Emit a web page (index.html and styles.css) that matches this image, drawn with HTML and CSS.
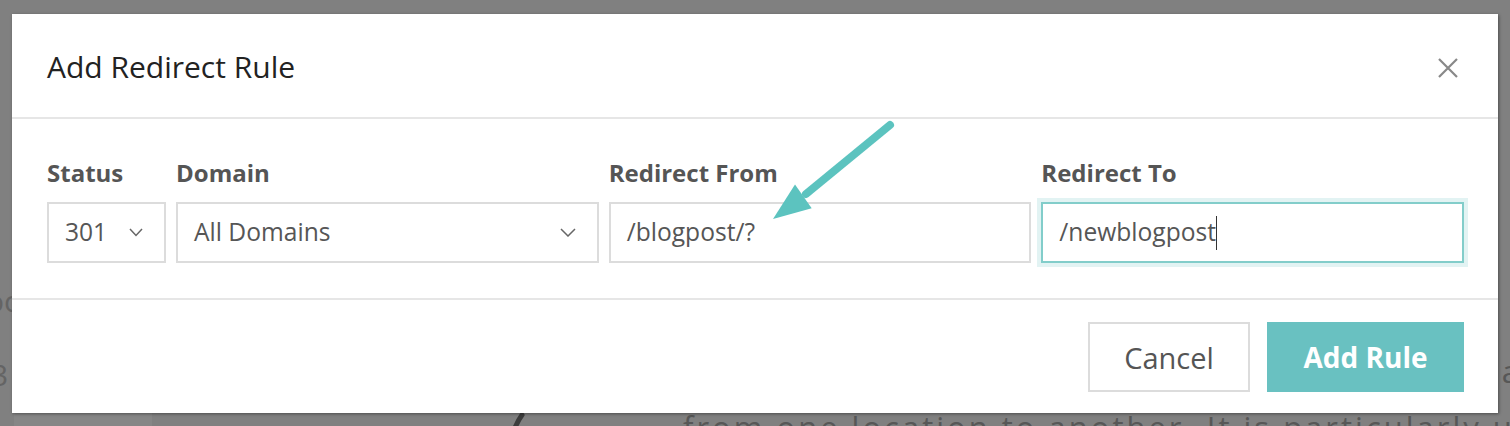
FILE: index.html
```html
<!DOCTYPE html>
<html lang="en">
<head>
<meta charset="utf-8">
<title>Add Redirect Rule</title>
<link rel="stylesheet" href="styles.css">
</head>
<body>
<div class="page">
  <aside class="side">
    <div class="side-line side-line-a">oc</div>
    <div class="side-line side-line-b">3</div>
    <div class="side-panel"></div>
  </aside>
  <main class="main">
    <div class="main-line main-line-end">a</div>
    <div class="main-line main-line-next">
      <svg class="figure-stroke" width="24" height="40" viewBox="0 0 24 40"><path d="M20 2 C14 10 10 20 6 38" fill="none" stroke="#3c3c3c" stroke-width="5" stroke-linecap="round"/></svg>
      <span class="main-text">from one location to another. It is particularly useful</span>
    </div>
  </main>
</div>

<div class="modal" role="dialog" aria-labelledby="modal-title">
  <header class="modal-header">
    <h2 class="modal-title" id="modal-title">Add Redirect Rule</h2>
    <button class="modal-close" type="button" aria-label="Close">
      <svg width="20" height="20" viewBox="0 0 20 20"><path d="M1 1 L19 19 M19 1 L1 19" stroke="#888" stroke-width="2.2" fill="none"/></svg>
    </button>
  </header>
  <section class="modal-body">
    <div class="field field-status">
      <div class="field-label">Status</div>
      <div class="control">
        <span class="control-value">301</span>
        <svg class="chevron" width="14" height="9" viewBox="0 0 14 9"><polyline points="1,1 7,7.5 13,1" fill="none" stroke="#666" stroke-width="1.5"/></svg>
      </div>
    </div>
    <div class="field">
      <div class="field-label">Domain</div>
      <div class="control">
        <span class="control-value">All Domains</span>
        <svg class="chevron" width="16" height="9" viewBox="0 0 16 9"><polyline points="1,1 8,8 15,1" fill="none" stroke="#666" stroke-width="1.5"/></svg>
      </div>
    </div>
    <div class="field">
      <div class="field-label">Redirect From</div>
      <div class="control">
        <span class="control-value">/blogpost/?</span>
      </div>
    </div>
    <div class="field">
      <div class="field-label">Redirect To</div>
      <div class="control control-focus">
        <span class="control-value">/newblogpost</span><span class="caret"></span>
      </div>
    </div>
  </section>
  <footer class="modal-footer">
    <button class="btn btn-cancel" type="button">Cancel</button>
    <button class="btn btn-primary" type="button">Add Rule</button>
  </footer>
  <svg class="annotation-arrow" width="160" height="120" viewBox="0 0 160 120">
    <line x1="138" y1="11" x2="54" y2="80" stroke="#5cc3bf" stroke-width="8" stroke-linecap="round"/>
    <polygon points="21,105 43,70.5 59.7,94.3" fill="#5cc3bf"/>
  </svg>
</div>
</body>
</html>
```

FILE: styles.css
```css
* {
  box-sizing: border-box;
}

html, body {
  margin: 0;
  padding: 0;
}

body {
  width: 1510px;
  height: 426px;
  overflow: hidden;
  background: #808080;
  font-family: "Open Sans", "Noto Sans", "DejaVu Sans", sans-serif;
  position: relative;
}

/* Background page (dimmed behind the modal) */
.page {
  display: grid;
  grid-template-columns: 152px 1fr;
  height: 426px;
  overflow: hidden;
}

.side {
  display: flex;
  flex-direction: column;
  padding-top: 273px;
  color: #646464;
  font-size: 30px;
  line-height: 56px;
}

.side-line {
  white-space: nowrap;
}

.side-line-a {
  margin-left: -14px;
}

.side-line-b {
  margin-left: -9px;
  margin-top: 18px;
}

.side-panel {
  flex: 1;
  margin-top: -50px;
  margin-left: 14px;
  background: #868686;
}

.main {
  display: flex;
  flex-direction: column;
  padding-top: 343px;
  margin-right: -12px;
  color: #575757;
  font-size: 31px;
  line-height: 56px;
  letter-spacing: 3px;
  min-width: 0;
}

.main-line {
  white-space: nowrap;
  overflow: visible;
}

.main-line-end {
  text-align: right;
}

.main-line-next {
  display: flex;
  align-items: flex-start;
}

.figure-stroke {
  margin-left: 350px;
  margin-top: 14px;
  flex: none;
}

.main-text {
  margin-left: 157px;
}

/* Modal */
.modal {
  position: absolute;
  left: 12px;
  top: 14px;
  width: 1486px;
  height: 399px;
  background: #fff;
  box-shadow: 1px 1px 3px rgba(0, 0, 0, 0.4);
  display: flex;
  flex-direction: column;
}

.modal-header {
  height: 105px;
  flex: none;
  display: flex;
  align-items: center;
  justify-content: space-between;
  padding: 0 40px 0 35px;
  border-bottom: 2px solid #e6e6e6;
}

.modal-title {
  margin: 0;
  font-size: 30px;
  font-weight: 400;
  color: #222;
  line-height: 40px;
  padding-top: 2px;
}

.modal-close {
  border: 0;
  background: none;
  padding: 0;
  width: 20px;
  height: 20px;
  display: flex;
  margin-top: 4px;
}

.modal-body {
  flex: none;
  display: flex;
  gap: 10px;
  padding: 41px 34px 35px 35px;
}

.field {
  flex: 1 1 0;
  min-width: 0;
  display: flex;
  flex-direction: column;
}

.field-status {
  flex: 0 0 119px;
}

.field-label {
  font-size: 24px;
  font-weight: 700;
  line-height: 26px;
  color: #555;
  margin-bottom: 16px;
  white-space: nowrap;
}

.control {
  height: 61px;
  border: 2px solid #dcdcdc;
  display: flex;
  align-items: center;
  justify-content: space-between;
  padding: 0 21px 0 16px;
  font-size: 24.6px;
  color: #565656;
  background: #fff;
}

.control-value {
  white-space: nowrap;
  line-height: 1;
}

.chevron {
  flex: none;
}

.control-focus {
  justify-content: flex-start;
  border-color: #82cdca;
  box-shadow: 0 0 0 4px #e2f3f3;
}

.caret {
  display: inline-block;
  width: 1px;
  height: 34px;
  background: #333;
  margin-left: 0;
}

.modal-footer {
  flex: none;
  border-top: 2px solid #e6e6e6;
  display: flex;
  justify-content: flex-end;
  gap: 17px;
  padding: 22px 34px 21px 35px;
}

.btn {
  height: 70px;
  font-family: inherit;
  font-size: 29px;
  display: flex;
  align-items: center;
  justify-content: center;
  padding: 0;
  cursor: pointer;
}

.btn-cancel {
  width: 162px;
  background: #fff;
  border: 2px solid #dcdcdc;
  color: #555;
  font-weight: 400;
}

.btn-primary {
  width: 197px;
  background: #69c1c1;
  border: 0;
  color: #fff;
  font-weight: 700;
  font-size: 28px;
}

.annotation-arrow {
  position: absolute;
  left: 740px;
  top: 100px;
  pointer-events: none;
}
```
